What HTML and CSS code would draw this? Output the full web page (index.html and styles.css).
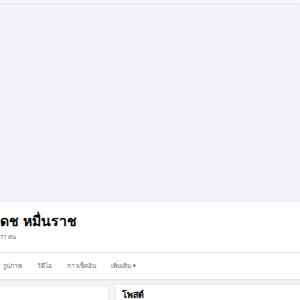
FILE: index.html
```html
<!DOCTYPE html>
<html lang="th">
<head>
<meta charset="utf-8">
<link rel="stylesheet" href="styles.css">
</head>
<body>
<div class="topbar"></div>
<div class="cover"></div>
<section class="profile">
  <h1 class="name">ดช หมื่นราช</h1>
  <div class="count">71 คน</div>
  <nav class="tabs">
    <span class="tab">รูปภาพ</span>
    <span class="tab">วิดีโอ</span>
    <span class="tab">การเช็คอิน</span>
    <span class="tab">เพิ่มเติม <span class="caret">▼</span></span>
  </nav>
</section>
<main class="content">
  <div class="card left"></div>
  <div class="card right"><div class="card-title">โพสต์</div></div>
</main>
</body>
</html>
```
FILE: styles.css
```css
html, body {
  margin: 0;
  padding: 0;
}
body {
  width: 300px;
  height: 300px;
  overflow: hidden;
  background: #f0f2f5;
  font-family: "Noto Sans", "DejaVu Sans", sans-serif;
  color: #050505;
}
.topbar {
  height: 3px;
  background: #f4f5f7;
  box-shadow: 0 1px 2px rgba(0,0,0,0.06);
  position: relative;
}
.cover {
  height: 199px;
  background: #f0f2f5;
}
.profile {
  background: #fff;
  height: 77px;
  box-shadow: 0 1px 2px rgba(0,0,0,0.08);
}
.name {
  margin: 0;
  padding-top: 8px;
  font-size: 14px;
  line-height: 22px;
  font-weight: 700;
}
.count {
  font-size: 6px;
  line-height: 10px;
  color: #65676b;
}
.tabs {
  margin-top: 10px;
  border-top: 1px solid #e4e6eb;
  display: flex;
  gap: 15px;
  padding: 7px 0 0 3px;
  font-size: 6.3px;
  line-height: 12px;
  color: #65676b;
}
.caret {
  font-size: 4px;
  vertical-align: 1px;
}
.content {
  display: flex;
  gap: 8px;
  padding-top: 6px;
}
.card {
  background: #fff;
  box-shadow: 0 1px 2px rgba(0,0,0,0.1);
}
.left {
  width: 108px;
  height: 20px;
  margin-top: 2px;
}
.right {
  flex: 1;
  height: 20px;
  padding: 4px 0 0 6px;
}
.card-title {
  font-size: 9px;
  font-weight: 700;
  line-height: 12px;
}
```
